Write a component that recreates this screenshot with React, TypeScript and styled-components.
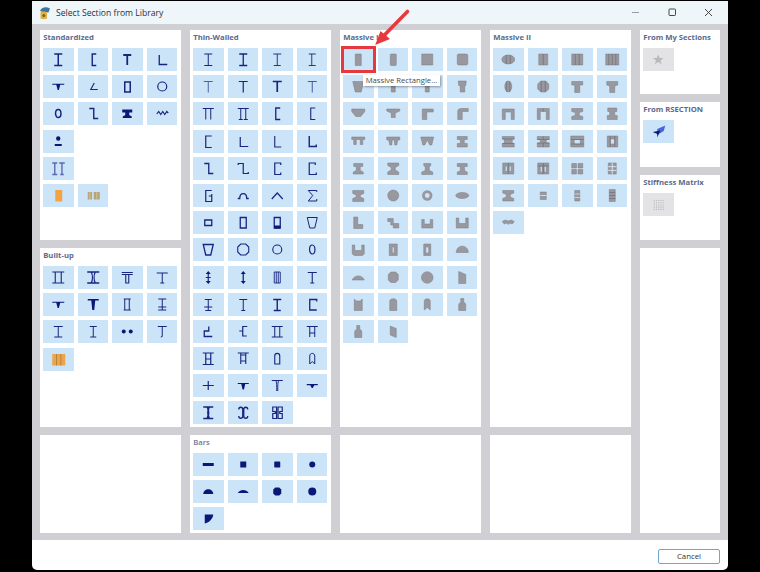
import React from "react";
import styled, { createGlobalStyle } from "styled-components";

const NAVY = "#17257f";
const SOLID = "#0b1877";
const GREY = "#98989e";
const STRIPE = "#6d6d75";
const RED = "#e8383f";

type Layer = { d: string; w: number; c?: string };
type Glyph = Layer[];
type Tone = "blue" | "massive" | "off";

const ln = (d: string, w = 1.1, c?: string): Glyph => [{ d, w, c }];
const fl = (d: string, c?: string): Glyph => [{ d, w: 0, c }];
const oval = (cx: number, cy: number, rx: number, ry = rx) =>
  `M${cx - rx} ${cy}a${rx} ${ry} 0 1 0 ${rx * 2} 0a${rx} ${ry} 0 1 0 ${-rx * 2} 0Z`;

const standardized: Glyph[] = [
  ln("M11 6H19M15 6V17.5M11 17.5H19", 1.5),
  ln("M18 6H14V17.5H18", 1.4),
  ln("M11 7H19M15 7V17", 1.8),
  ln("M12 7V16.5H20", 1.3),
  fl("M9 8.8H21V9.8H17L15.6 15H14.4L13 9.8H9Z"),
  ln("M16 8L12.5 14.5H19.5", 1.1),
  ln("M12.5 7H18V17H12.5Z", 1.5),
  ln(oval(15, 11.5, 4.5), 1.2),
  ln(oval(15, 11.5, 2.7, 4), 1.5),
  ln("M11 6.5H15.5V16.5H20", 1.4),
  fl("M10 7.5H20V10.5H17V13L19.5 14.5V16H10.5V14.5L13 13V10.5H10Z"),
  ln("M9.5 12L11.5 9.5L13.5 12.5L15.5 9.5L17.5 12.5L19.5 9.5L21 11", 1.2),
  [...fl(oval(15, 8.5, 2.2)), ...fl("M11.5 14H18.5V16H11.5Z")],
  ln("M9 6H14M11.5 6V17.5M9 17.5H14M16 6H21.5M18.7 6V17.5M17 17.5H20.5", 1.4, "#5c69ad"),
  fl("M12 6H19V17.5H12Z", "#f2a445"),
  [
    ...fl("M9.5 8H13.8V15.5H9.5Z", "#b3a67f"),
    ...fl("M15.5 8H21.5V15.5H15.5Z", "#b3a67f"),
    ...ln("M11.6 8V15.5M18.5 8V15.5", 0.8, "#e3c993"),
  ],
];

const builtUp: Glyph[] = [
  ln("M9 6H21M9 17H21M12 6V17M18 6V17", 1.1),
  ln("M9 6H21M9 17H21M13 6C14.5 9 14.5 14 13 17M17 6C15.5 9 15.5 14 17 17", 1.3),
  ln("M9.5 6.5H20.5M9.5 8.5H20.5M13.5 8.5V17M16.5 8.5V17M13 17H17", 1.1),
  ln("M9.5 7H20.5M15 7V17M13 17H17", 1),
  fl("M9 8.8H21V9.8H17L15.6 15H14.4L13 9.8H9Z"),
  fl("M9.5 6H20.5V7.5H17L16 17H14L13 7.5H9.5Z"),
  ln("M11.5 6H18.5M11.5 17H18.5M12.5 6V17M17 6V17", 1),
  ln("M11 6H19M15 6V17M11 14H19M11 17H19", 1),
  ln("M10.5 6.5H19.5M15 6.5V17M11 17H19", 1),
  ln("M11.5 6.5H18.5M15 6.5V17M12 17H18", 1),
  [...fl(oval(11.5, 11.5, 2)), ...fl(oval(18.5, 11.5, 2))],
  ln("M10.5 6.5H19.5M15 6.5V16.5L13.5 17", 1),
  [
    ...fl("M9 6H22V17.5H9Z", "#eca54a"),
    ...ln("M13.3 6V17.5M17.6 6V17.5", 0.8, "#a97a3a"),
  ],
];

const thinWalled: Glyph[] = [
  ln("M11 6H19M15 6V17.5M11 17.5H19", 1),
  ln("M11 6H19M15 6V17.5M11 17.5H19", 1.3),
  ln("M11 6H19M15 6V17.5M11.5 17.5H18.5", 0.9),
  ln("M11.5 6H18.5M14.5 6V17.5M11.5 17.5H18.5", 0.9),
  ln("M10.5 6.5H19.5M15 6.5V17.5", 1, "#5060a4"),
  ln("M10.5 6.5H19.5M15 6.5V17.5", 1.2),
  ln("M10.5 6.5H19.5M15 6.5V17", 1.7),
  ln("M10.5 6.5H19.5M15 6.5V17.5", 0.9, "#3a489a"),
  ln("M9.5 6.5H20.5M12.5 6.5V17.5M17.5 6.5V17.5", 1),
  ln("M9.5 6.5H20.5M12.5 6.5V17.5M17.5 6.5V17.5M10.5 17.5H14.5M15.5 17.5H19.5", 1),
  ln("M18 6H13.5V17.5H18", 1.3),
  ln("M18 6H13.5V17.5H18", 1.1),
  ln("M18.5 6H12.5V17.5H18.5", 1.2),
  ln("M12 7V16.5H20", 1.2),
  ln("M12.5 6V17H19", 1.1),
  ln("M12 6V16.5H19V14.5", 1.4),
  ln("M11 6.5H15.5V16.5H20", 1.3),
  ln("M10 8V6.5H15V16.5H20V15", 1.2),
  ln("M18.5 8V6H12.5V17.5H18.5V15.5", 1.2),
  ln("M18 8V6H12V17.5H19V15.5", 1.2),
  ln("M18.5 6.5H12.5V17.5H18.5V12H15.5M18.5 12V10", 1.2),
  ln("M9.5 14.5H11.5C11.5 8 18.5 8 18.5 14.5H20.5", 1.3),
  ln("M9.5 15L15 9L20.5 15", 1.2),
  ln("M19.5 8V6.5H11L15.5 11.5L11 17H19.5V15", 1),
  ln("M11.5 9H18.5V14.5H11.5Z", 1.3),
  ln("M12 6.5H18V17H12Z", 1.3),
  [...ln("M12 6.5H18V17H12Z", 1.3), ...fl("M12 14.5H18V17.5H12Z")],
  ln("M10 6.5H20L17.5 17H12.5Z", 1),
  ln("M10 6.5H20L17.5 17H12.5Z", 1.3),
  ln("M12.5 6L17.5 6L20.5 9L20.5 14L17.5 17L12.5 17L9.5 14L9.5 9Z", 1.1),
  ln(oval(15, 11.5, 4.5), 1.1),
  ln(oval(15, 11.5, 2.7, 4.5), 1.2),
  [...ln("M15 8V15M12.5 11.5H17.5", 1.2), ...fl("M15 5L17.5 8H12.5ZM15 18L12.5 15H17.5Z")],
  [...ln("M15 8V15", 1.3), ...fl("M15 5L17.5 8H12.5ZM15 18L12.5 15H17.5Z")],
  ln("M12 6H18V17H12ZM14 6V17M16 6V17", 0.9),
  ln("M10.5 6.5H19.5M15 6.5V17M13 17H17", 1.1),
  ln("M11.5 6.5H18.5M15 6.5V17.5M11 14H19M12 17.5H18", 1),
  ln("M11 6.5H19M15 6.5V17.5M13 17.5H17", 1),
  ln("M11 6.5H19M15 6.5V17.5M11.5 17.5H18.5", 1.4),
  ln("M19.5 8.5V6.5H12.5V17H19.5", 1.3),
  ln("M15.5 6.5V11H11V16.5H19", 1.3),
  ln("M19 6.5H14.5V11V16H18.5M14.5 11H11", 1.2),
  ln("M9.5 6.5H20.5M9.5 17H20.5M12.5 6.5V17M17.5 6.5V17", 1),
  ln("M9.5 6.5H20.5M12.5 6.5V17M17.5 6.5V17M12.5 13H17.5", 1),
  ln("M9.5 6H20.5M9.5 17.5H20.5M12.5 6V17.5M17.5 6V17.5M12.5 12H17.5", 1.2),
  ln("M9.5 6H20.5M12.5 6V17M17.5 6V17M12.5 8H17.5M12.5 14H17.5", 1.1),
  ln("M12.5 17V9C12.5 5.5 17.5 5.5 17.5 9V17Z", 1.1),
  ln("M12.5 17V9C12.5 5.5 17.5 5.5 17.5 9V17L15 14.5Z", 1),
  ln("M9.5 11.5H20.5M15 7V16", 1.2),
  fl("M9.5 9H20.5V10H17L15.7 15.5H14.3L13 10H9.5Z"),
  ln("M9.5 6.5H20.5M13.5 6.5C14.5 8 14.5 12 14.5 17M16.5 6.5C15.5 8 15.5 12 15.5 17", 1),
  fl("M9.5 10H20.5V11.2H17L15.5 14H14.5L13 11.2H9.5Z"),
  ln("M10 6H20M10 17.5H20M14 6C15.5 9 15.5 14 14 17.5M16 6C14.5 9 14.5 14 16 17.5", 1.6),
  ln("M10.5 8.5C10.5 5.5 14.5 5.5 14.5 8.5V15C14.5 18 10.5 18 10.5 15M19.5 8.5C19.5 5.5 15.5 5.5 15.5 8.5V15C15.5 18 19.5 18 19.5 15", 1.3),
  ln("M14.3 6H10.5V10.5H13V12.5H10.5V17.5H14.3ZM15.8 6H20V10.5H17.5V12.5H20V17.5H15.8Z", 1.2),
];

const massiveOne: Glyph[] = [
  fl("M12 6H18V17.5H12Z"),
  fl("M12.5 6H17.5L18 6.5V17L17.5 17.5H12.5L12 17V6.5Z"),
  fl("M9.5 6H20.5V17H9.5Z"),
  fl("M11 6H19.5L20.5 7V16L19.5 17H11L10 16V7Z"),
  fl("M9.5 6.5H20.5L18 17H12Z"),
  fl("M9.5 6.5H20.5V8.5H17V17H13V8.5H9.5Z"),
  fl("M9.5 6.5H20.5V8.5H17V17H13V8.5H9.5Z"),
  fl("M11 6H19L18.5 10.5L17.5 11V17H13V11L11.5 10.5Z"),
  fl("M8.5 7H21.5V9.5L17.5 14.5H12.5L8.5 9.5Z"),
  fl("M8.5 7H21.5V9L17 11V15.5H13V11L8.5 9Z"),
  fl("M10 7H21V10H14.5V17.5H10Z"),
  fl("M10.5 9C10.5 7.5 12 6.5 14 6.5H21V9.5H15V17.5H10.5Z"),
  fl("M8.5 7H21.5V9.5H19.5V14.5H17V9.5H13V14.5H10.5V9.5H8.5Z"),
  fl("M8.5 7H21.5V10H19.5L18.5 15H16.5L16 10H14L13.5 15H11.5L10.5 10H8.5Z"),
  fl("M8.5 7H21.5L19.5 15H17.5L15 10L12.5 15H10.5Z"),
  fl("M10 6.5H20V9.5H17V13.5H20V17H10V13.5H13V9.5H10Z"),
  fl("M10.5 6.5H19.5V9.5H17V13.5L20 15V17H10V15L13 13.5V9.5H10.5Z"),
  fl("M9.5 6H20.5V8.5L17 10.5V13L20.5 15V17.5H9.5V15L13 13V10.5L9.5 8.5Z"),
  fl("M11.5 6.5H18.5V8.5L17 10V13.5L20.5 15V17.5H9.5V15L13 13.5V10L11.5 8.5Z"),
  fl("M10 6.5H20V9.5H17L17.5 14L20 15V17.5H10V15L13 14L13 9.5H10Z"),
  fl("M9.5 6.5H20.5V9.5L17 11V13L20.5 14.5V17.5H9.5V14.5L13 13V11L9.5 9.5Z"),
  fl(oval(15, 11.5, 5.5)),
  [{ d: oval(15, 11.5, 3.8), w: 2.8, c: GREY }],
  fl(oval(15, 11.5, 6.5, 3)),
  fl("M10.5 6H14.5V13.5H19.5V17.5H10.5Z"),
  fl("M9.5 7.5H15V12.5H20.5V17H15V14H12.5V10.5H9.5Z"),
  fl("M9.5 8.5H12V13H18V8.5H20.5V17H9.5Z"),
  fl("M9 7H11.5V12.5H18.5V7H21V17H9Z"),
  fl("M9 7H11.5V12.5H18.5V7H21V16L19 17.5H11L9 16Z"),
  fl("M11 6H19V17.5H11ZM14 9V15H16V9Z"),
  fl("M11.5 6H18.5V17.5H11.5ZM13.5 9V15H16.5V9Z"),
  fl("M9 14.5C9 6 21 6 21 14.5Z"),
  fl("M9 14C11 8.5 19 8.5 21 14Z"),
  fl("M12.5 6H17.5L20 8.5V14L17.5 16.5H12.5L10 14V8.5Z"),
  fl(oval(15, 11.5, 5.8)),
  fl("M11.5 5.5L18.5 8.5V17.5H11.5Z"),
  fl("M11 6L13 8H17L19 6V17.5H11Z"),
  fl("M11.5 8C11.5 5 18.5 5 18.5 8V17.5H11.5Z"),
  fl("M12 8C12 5 18 5 18 8V17L15 14.5L12 17Z"),
  fl("M13.5 5.5H16.5V9L18.5 11V17.5H11.5V11L13.5 9Z"),
  fl("M13.5 5.5H16.5V9L18.5 11V17.5H11.5V11L13.5 9Z"),
  fl("M12 6L18 8.5V17.5L12 15Z"),
];

const stripes = (d: string): Glyph => ln(d, 0.7, STRIPE);

const massiveTwo: Glyph[] = [
  [...fl(oval(15, 11.5, 6.5, 4.5)), ...stripes("M13 7V16M17 7V16")],
  [...fl("M10.5 6H19.5V17H10.5Z"), ...stripes("M15 6V17")],
  [...fl("M9.5 6H20.5V17H9.5Z"), ...stripes("M13 6V17M17 6V17")],
  [...fl("M8.5 6H21.5V17H8.5Z"), ...stripes("M11.5 6V17M15 6V17M18.5 6V17")],
  [...fl(oval(15, 11.5, 3.5, 5.5)), ...stripes("M13.5 6V17M16.5 6V17")],
  [...fl("M12.5 6H17.5L20.5 9V14L17.5 17H12.5L9.5 14V9Z"), ...stripes("M13 6V17M17 6V17")],
  fl("M9.5 6.5H20.5V10H17.5V17.5H12.5V10H9.5Z"),
  fl("M9.5 6.5H20.5V10L17.5 11V17.5H12.5V11L9.5 10Z"),
  fl("M9 7H21V17.5H18V10H12V17.5H9Z"),
  [...fl("M9 6.5H21V17.5H18V9.5H12V17.5H9Z"), ...stripes("M15 6.5V9.5")],
  fl("M9.5 6.5H20.5V9.5L17 10.5V13.5L20.5 14.5V17.5H9.5V14.5L13 13.5V10.5L9.5 9.5Z"),
  fl("M10.5 6H19.5V9.5H17.5V13.5H20V17.5H10V13.5H12.5V9.5H10.5Z"),
  [...fl("M9 6.5H21V9H19V13.5H21V17H9V13.5H11V9H9Z"), ...stripes("M9 9H21M9 13.5H21")],
  [...fl("M9 6.5H21V9.5H18V13H21V17H9V13H12V9.5H9Z"), ...stripes("M9 9.5H21M9 13H21M15 6.5V9.5M15 13V17")],
  [...fl("M8.5 6H21.5V17H8.5ZM12 9.5V14H18V9.5Z"), ...stripes("M8.5 9.5H21.5M8.5 14H21.5")],
  [...fl("M10 6H20.5V17H10ZM13 9V14H17.5V9Z"), ...stripes("M13 6V17M17.5 6V17")],
  [...fl("M9.5 6H20.5V17H9.5ZM12 9V14.5H14V9ZM16 9V14.5H18V9Z"), ...stripes("M15 6V17")],
  [...fl("M9.5 6H20.5V17H9.5ZM12 9V15H14V9ZM16 9V15H18V9Z"), ...stripes("M15 6V17M9.5 9H20.5")],
  [...fl("M9.5 6.5H14.2V11H9.5ZM15.8 6.5H20.5V11H15.8ZM9.5 12.5H14.2V17H9.5ZM15.8 12.5H20.5V17H15.8Z")],
  [...fl("M11 6H19V17H11Z"), ...ln("M11 9.7H19M11 13.4H19M15 6V17", 0.9, "#dfe9f4")],
  fl("M9.5 6.5H20.5V9L17 10.5V13L20.5 14.5V17H9.5V14.5L13 13V10.5L9.5 9Z"),
  [...fl("M12 8H18V15.5H12Z"), ...ln("M12 11.5H18", 0.8, "#e1ebf5")],
  [...fl("M12.5 6.5H17.5V17H12.5Z"), ...ln("M12.5 10H17.5M12.5 13.5H17.5", 0.7, "#e1ebf5")],
  [...fl("M12 5.5H18V17.5H12Z"), ...stripes("M12 8.5H18M12 11.5H18M12 14.5H18")],
  fl("M9 10.5L12 9L15 10L18 9L21 10.5L19 13L16.5 12L15 13.5L13.5 12L11 13Z"),
];

const bars: Glyph[] = [
  fl("M9.5 10H20.5V13H9.5Z"),
  fl("M12 8.5H18V14.5H12Z"),
  fl("M12.5 8.5H17.5L18 9V14L17.5 14.5H12.5L12 14V9Z"),
  fl(oval(15, 11.5, 3)),
  fl("M10 14C10 7.5 20 7.5 20 14Z"),
  fl("M9.5 13C12 9 18 9 20.5 13Z"),
  fl("M13 7.5H17L19 9.5V13.5L17 15.5H13L11 13.5V9.5Z"),
  fl(oval(15, 11.5, 4)),
  fl("M11.5 7.5H20C19.5 12 16 15.5 11.5 16.5Z"),
];

const star = "M15 6.5L16.5 10H20.3L17.3 12.4L18.4 16.2L15 14L11.6 16.2L12.7 12.4L9.7 10H13.5Z";

const rsectionIcon: Glyph = [
  ...fl("M14 9L22 5.5L20.5 11L14 15Z", "#4a63d8"),
  ...fl("M9.5 12L17 10.5L14 17.5L14 14Z", SOLID),
];

let gridDots = "";
for (let r = 0; r < 5; r++) {
  for (let c = 0; c < 5; c++) {
    gridDots += `M${10.5 + c * 2.2} ${7 + r * 2.2}h1.1v1.1h-1.1Z`;
  }
}

const GlobalStyle = createGlobalStyle`
  html, body {
    margin: 0;
    padding: 0;
    background: #000;
  }
  body {
    width: 760px;
    height: 572px;
    overflow: hidden;
    font-family: "Open Sans", "Liberation Sans", sans-serif;
  }
`;

const Screen = styled.div`
  display: flex;
  width: 760px;
  height: 572px;
  padding: 1px 0 2px 32px;
  box-sizing: border-box;
  background: #000;
`;

const Win = styled.div`
  display: flex;
  flex-direction: column;
  width: 696px;
  background: #fff;
  border-radius: 0 0 5px 5px;
  overflow: hidden;
`;

const TitleBar = styled.div`
  display: flex;
  align-items: center;
  height: 23px;
  flex: none;
  padding-left: 6px;
  background: #eff6fa;
`;

const TitleText = styled.span`
  margin-left: 5px;
  font-size: 8.6px;
  color: #2b2f38;
`;

const Controls = styled.div`
  display: flex;
  margin-left: auto;
  margin-right: 1px;
`;

const ControlBtn = styled.div`
  display: flex;
  align-items: center;
  justify-content: center;
  width: 36.5px;
  height: 23px;
`;

const Body = styled.div`
  display: flex;
  flex: 1;
  gap: 8.5px;
  padding: 6px 7px 7px 7.5px;
  background: #cfcfd4;
`;

const Column = styled.div<{ $narrow?: boolean }>`
  display: flex;
  flex-direction: column;
  gap: 8px;
  width: ${(p) => (p.$narrow ? "80.5px" : "141.5px")};
  flex: none;
`;

const Panel = styled.section<{ $height?: number }>`
  box-sizing: border-box;
  padding: 0 3.7px;
  background: #fff;
  ${(p) => (p.$height ? `height: ${p.$height}px; flex: none;` : "flex: 1;")}
`;

const Heading = styled.h3<{ $light?: boolean }>`
  margin: 0;
  height: 18px;
  font-size: 7.7px;
  line-height: 15px;
  font-weight: ${(p) => (p.$light ? 600 : 700)};
  color: ${(p) => (p.$light ? "#6f7a90" : "#5d6a8c")};
  white-space: nowrap;
`;

const Tiles = styled.div`
  display: grid;
  grid-template-columns: repeat(4, 30.5px);
  grid-auto-rows: 23px;
  column-gap: 4px;
  row-gap: 4.2px;
`;

const Tile = styled.div<{ $off?: boolean; $pinned?: boolean; $rowStart?: boolean }>`
  background: ${(p) => (p.$off ? "#e3e3e5" : "#cce4f8")};
  ${(p) => p.$pinned && "position: relative;"}
  ${(p) => p.$rowStart && "grid-column-start: 1;"}
`;

const GlyphSvg = styled.svg`
  display: block;
  width: 30.5px;
  height: 23px;
  filter: blur(0.3px);
`;

const RedBox = styled.div`
  position: absolute;
  left: -2.5px;
  top: -2px;
  width: 35px;
  height: 27px;
  box-sizing: border-box;
  border: 3px solid ${RED};
`;

const Tooltip = styled.div`
  position: absolute;
  left: 19.5px;
  top: 27px;
  z-index: 5;
  width: 77.5px;
  height: 11px;
  background: #fff;
  box-shadow: 1px 1px 2px rgba(0, 0, 0, 0.35);
  font-size: 7.7px;
  line-height: 11px;
  text-align: center;
  color: #4a4a4a;
  white-space: nowrap;
`;

const Arrow = styled.svg`
  position: absolute;
  left: 30px;
  top: -40px;
  z-index: 6;
  width: 40px;
  height: 40px;
`;

const Footer = styled.div`
  display: flex;
  justify-content: flex-end;
  align-items: center;
  height: 30px;
  flex: none;
  padding: 2px 8px 0 0;
  box-sizing: border-box;
`;

const CancelButton = styled.button`
  width: 62px;
  height: 15px;
  padding: 0;
  border: 1px solid #6ea8c9;
  border-radius: 2px;
  background: #fff;
  font-family: inherit;
  font-size: 7.8px;
  line-height: 12px;
  color: #333;
`;

const paint = (layer: Layer, tone: Tone) => {
  if (layer.w > 0) {
    return { fill: "none", stroke: layer.c ?? NAVY, strokeWidth: layer.w };
  }
  if (tone === "massive") {
    return { fill: layer.c ?? GREY, stroke: "#7b7b83", strokeWidth: 0.5, fillRule: "evenodd" as const };
  }
  if (tone === "off") {
    return { fill: layer.c ?? "#b9b9bd" };
  }
  return { fill: layer.c ?? SOLID, fillRule: "evenodd" as const };
};

const Icon = ({ glyph, tone }: { glyph: Glyph; tone: Tone }) => (
  <GlyphSvg viewBox="0 0 30 23">
    {glyph.map((layer, i) => (
      <path key={i} d={layer.d} {...paint(layer, tone)} />
    ))}
  </GlyphSvg>
);

const TileSet = ({ glyphs, tone = "blue", breaks = [] }: { glyphs: Glyph[]; tone?: Tone; breaks?: number[] }) => (
  <Tiles>
    {glyphs.map((glyph, i) => (
      <Tile key={i} $rowStart={breaks.includes(i)}>
        <Icon glyph={glyph} tone={tone} />
      </Tile>
    ))}
  </Tiles>
);

export default function App() {
  return (
    <Screen>
      <GlobalStyle />
      <Win>
        <TitleBar>
          <svg width="13" height="14" viewBox="0 0 13 14">
            <path d="M2 5C3 1.5 8 0 12 2.5L10.5 6.5L5 6Z" fill="#41749c" />
            <path d="M2.5 7C2.5 5 9 5 9 7V12.5C7 13.5 4.5 13.5 2.5 12.5Z" fill="#e0b040" />
            <circle cx="5.8" cy="9.5" r="1.5" fill="#7a6222" />
          </svg>
          <TitleText>Select Section from Library</TitleText>
          <Controls>
            <ControlBtn>
              <svg width="9" height="9" viewBox="0 0 9 9">
                <path d="M1 4.5H8" stroke="#9a9fa5" strokeWidth="1" />
              </svg>
            </ControlBtn>
            <ControlBtn>
              <svg width="9" height="9" viewBox="0 0 9 9">
                <rect x="1" y="1" width="6.5" height="6.5" rx="0.8" fill="none" stroke="#333" strokeWidth="0.9" />
              </svg>
            </ControlBtn>
            <ControlBtn>
              <svg width="9" height="9" viewBox="0 0 9 9">
                <path d="M1 1L8 8M8 1L1 8" stroke="#333" strokeWidth="0.9" />
              </svg>
            </ControlBtn>
          </Controls>
        </TitleBar>
        <Body>
          <Column>
            <Panel $height={210}>
              <Heading>Standardized</Heading>
              <TileSet glyphs={standardized} breaks={[13, 14]} />
            </Panel>
            <Panel $height={179}>
              <Heading>Built-up</Heading>
              <TileSet glyphs={builtUp} />
            </Panel>
            <Panel />
          </Column>
          <Column>
            <Panel $height={397}>
              <Heading>Thin-Walled</Heading>
              <TileSet glyphs={thinWalled} />
            </Panel>
            <Panel>
              <Heading $light>Bars</Heading>
              <TileSet glyphs={bars} />
            </Panel>
          </Column>
          <Column>
            <Panel $height={397}>
              <Heading>Massive I</Heading>
              <Tiles>
                {massiveOne.map((glyph, i) => (
                  <Tile key={i} $pinned={i === 0}>
                    <Icon glyph={glyph} tone="massive" />
                    {i === 0 && (
                      <>
                        <RedBox />
                        <Tooltip>Massive Rectangle...</Tooltip>
                        <Arrow viewBox="0 0 40 40">
                          <path d="M34.5 3.5L11 27.5" stroke={RED} strokeWidth="3.6" strokeLinecap="round" />
                          <path d="M2.2 37L7.5 23L17 31Z" fill={RED} />
                        </Arrow>
                      </>
                    )}
                  </Tile>
                ))}
              </Tiles>
            </Panel>
            <Panel />
          </Column>
          <Column>
            <Panel $height={397}>
              <Heading>Massive II</Heading>
              <TileSet glyphs={massiveTwo} tone="massive" />
            </Panel>
            <Panel />
          </Column>
          <Column $narrow>
            <Panel $height={64}>
              <Heading>From My Sections</Heading>
              <Tiles>
                <Tile $off>
                  <Icon glyph={fl(star)} tone="off" />
                </Tile>
              </Tiles>
            </Panel>
            <Panel $height={65}>
              <Heading>From RSECTION</Heading>
              <Tiles>
                <Tile>
                  <Icon glyph={rsectionIcon} tone="blue" />
                </Tile>
              </Tiles>
            </Panel>
            <Panel $height={65}>
              <Heading>Stiffness Matrix</Heading>
              <Tiles>
                <Tile $off>
                  <Icon glyph={fl(gridDots)} tone="off" />
                </Tile>
              </Tiles>
            </Panel>
            <Panel />
          </Column>
        </Body>
        <Footer>
          <CancelButton>Cancel</CancelButton>
        </Footer>
      </Win>
    </Screen>
  );
}
